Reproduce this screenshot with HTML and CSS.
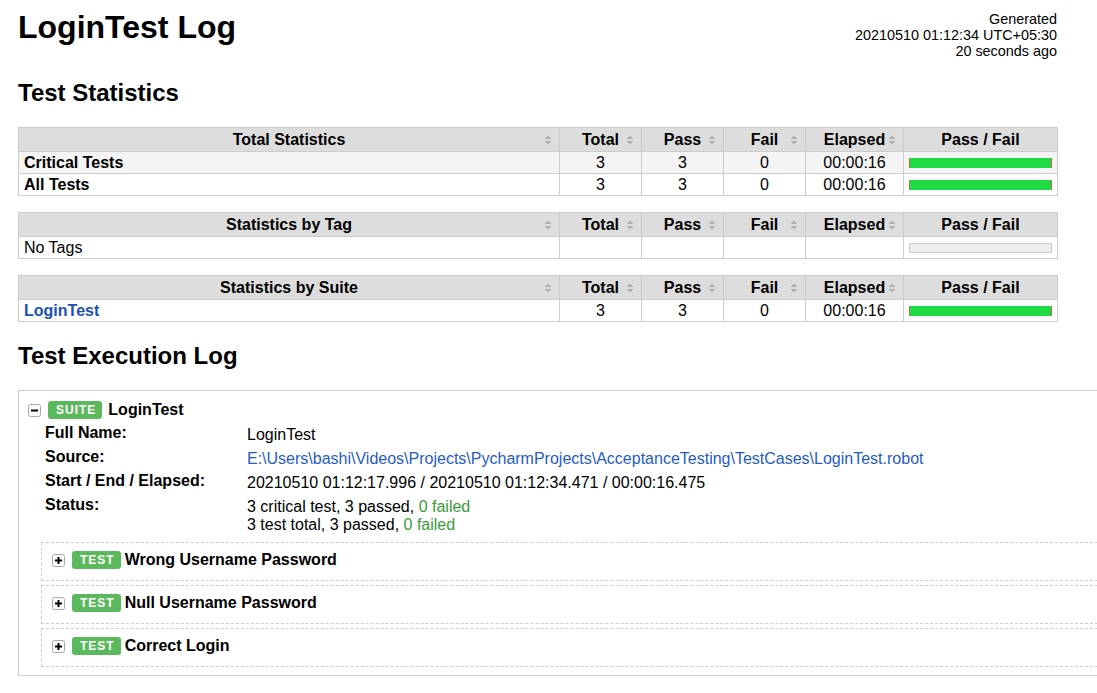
FILE: index.html
```html
<!DOCTYPE html>
<html lang="en">
<head>
<meta charset="utf-8">
<title>LoginTest Log</title>
<link rel="stylesheet" href="styles.css">
</head>
<body>
<div class="page">
  <header class="header">
    <h1>LoginTest Log</h1>
    <div class="generated">Generated<br>20210510 01:12:34 UTC+05:30<br>20 seconds ago</div>
  </header>

  <h2 class="h2-stats">Test Statistics</h2>

  <table class="stats">
    <thead>
      <tr>
        <th class="stat-head">Total Statistics<svg class="sort" width="8" height="10" viewBox="0 0 8 10"><path d="M0.5 4L4 0.5L7.5 4Z M0.5 6L4 9.5L7.5 6Z" fill="#b0b0b0"/></svg></th>
        <th class="col-stat">Total<svg class="sort" width="8" height="10" viewBox="0 0 8 10"><path d="M0.5 4L4 0.5L7.5 4Z M0.5 6L4 9.5L7.5 6Z" fill="#b0b0b0"/></svg></th>
        <th class="col-stat">Pass<svg class="sort" width="8" height="10" viewBox="0 0 8 10"><path d="M0.5 4L4 0.5L7.5 4Z M0.5 6L4 9.5L7.5 6Z" fill="#b0b0b0"/></svg></th>
        <th class="col-stat">Fail<svg class="sort" width="8" height="10" viewBox="0 0 8 10"><path d="M0.5 4L4 0.5L7.5 4Z M0.5 6L4 9.5L7.5 6Z" fill="#b0b0b0"/></svg></th>
        <th class="col-elapsed">Elapsed<svg class="sort" width="8" height="10" viewBox="0 0 8 10"><path d="M0.5 4L4 0.5L7.5 4Z M0.5 6L4 9.5L7.5 6Z" fill="#b0b0b0"/></svg></th>
        <th class="col-graph">Pass / Fail</th>
      </tr>
    </thead>
    <tbody>
      <tr class="row-hover">
        <td class="stat-name"><b>Critical Tests</b></td>
        <td>3</td><td>3</td><td>0</td><td>00:00:16</td>
        <td><div class="graph pass"></div></td>
      </tr>
      <tr>
        <td class="stat-name"><b>All Tests</b></td>
        <td>3</td><td>3</td><td>0</td><td>00:00:16</td>
        <td><div class="graph pass"></div></td>
      </tr>
    </tbody>
  </table>

  <table class="stats">
    <thead>
      <tr>
        <th class="stat-head">Statistics by Tag<svg class="sort" width="8" height="10" viewBox="0 0 8 10"><path d="M0.5 4L4 0.5L7.5 4Z M0.5 6L4 9.5L7.5 6Z" fill="#b0b0b0"/></svg></th>
        <th class="col-stat">Total<svg class="sort" width="8" height="10" viewBox="0 0 8 10"><path d="M0.5 4L4 0.5L7.5 4Z M0.5 6L4 9.5L7.5 6Z" fill="#b0b0b0"/></svg></th>
        <th class="col-stat">Pass<svg class="sort" width="8" height="10" viewBox="0 0 8 10"><path d="M0.5 4L4 0.5L7.5 4Z M0.5 6L4 9.5L7.5 6Z" fill="#b0b0b0"/></svg></th>
        <th class="col-stat">Fail<svg class="sort" width="8" height="10" viewBox="0 0 8 10"><path d="M0.5 4L4 0.5L7.5 4Z M0.5 6L4 9.5L7.5 6Z" fill="#b0b0b0"/></svg></th>
        <th class="col-elapsed">Elapsed<svg class="sort" width="8" height="10" viewBox="0 0 8 10"><path d="M0.5 4L4 0.5L7.5 4Z M0.5 6L4 9.5L7.5 6Z" fill="#b0b0b0"/></svg></th>
        <th class="col-graph">Pass / Fail</th>
      </tr>
    </thead>
    <tbody>
      <tr>
        <td class="stat-name">No Tags</td>
        <td></td><td></td><td></td><td></td>
        <td><div class="graph"></div></td>
      </tr>
    </tbody>
  </table>

  <table class="stats">
    <thead>
      <tr>
        <th class="stat-head">Statistics by Suite<svg class="sort" width="8" height="10" viewBox="0 0 8 10"><path d="M0.5 4L4 0.5L7.5 4Z M0.5 6L4 9.5L7.5 6Z" fill="#b0b0b0"/></svg></th>
        <th class="col-stat">Total<svg class="sort" width="8" height="10" viewBox="0 0 8 10"><path d="M0.5 4L4 0.5L7.5 4Z M0.5 6L4 9.5L7.5 6Z" fill="#b0b0b0"/></svg></th>
        <th class="col-stat">Pass<svg class="sort" width="8" height="10" viewBox="0 0 8 10"><path d="M0.5 4L4 0.5L7.5 4Z M0.5 6L4 9.5L7.5 6Z" fill="#b0b0b0"/></svg></th>
        <th class="col-stat">Fail<svg class="sort" width="8" height="10" viewBox="0 0 8 10"><path d="M0.5 4L4 0.5L7.5 4Z M0.5 6L4 9.5L7.5 6Z" fill="#b0b0b0"/></svg></th>
        <th class="col-elapsed">Elapsed<svg class="sort" width="8" height="10" viewBox="0 0 8 10"><path d="M0.5 4L4 0.5L7.5 4Z M0.5 6L4 9.5L7.5 6Z" fill="#b0b0b0"/></svg></th>
        <th class="col-graph">Pass / Fail</th>
      </tr>
    </thead>
    <tbody>
      <tr>
        <td class="stat-name"><a class="suite-link" href="#s1">LoginTest</a></td>
        <td>3</td><td>3</td><td>0</td><td>00:00:16</td>
        <td><div class="graph pass"></div></td>
      </tr>
    </tbody>
  </table>

  <h2 class="h2-log">Test Execution Log</h2>

  <div class="log">
    <div class="element-header">
      <svg class="toggle" width="13" height="13" viewBox="0 0 13 13"><rect x="0.5" y="0.5" width="12" height="12" rx="2" fill="#fff" stroke="#a8a8a8"/><path d="M3 6.5h7" stroke="#000" stroke-width="2"/></svg>
      <span class="label">Suite</span>
      <span class="name">LoginTest</span>
    </div>
    <div class="details">
      <div class="dt">Full Name:</div>
      <div class="dd">LoginTest</div>
      <div class="dt">Source:</div>
      <div class="dd"><a class="source-link" href="#">E:\Users\bashi\Videos\Projects\PycharmProjects\AcceptanceTesting\TestCases\LoginTest.robot</a></div>
      <div class="dt">Start / End / Elapsed:</div>
      <div class="dd">20210510 01:12:17.996 / 20210510 01:12:34.471 / 00:00:16.475</div>
      <div class="dt">Status:</div>
      <div class="dd">3 critical test, 3 passed, <span class="ok">0 failed</span><br>3 test total, 3 passed, <span class="ok">0 failed</span></div>
    </div>

    <div class="test first">
      <div class="element-header">
        <svg class="toggle" width="13" height="13" viewBox="0 0 13 13"><rect x="0.5" y="0.5" width="12" height="12" rx="2" fill="#fff" stroke="#a8a8a8"/><path d="M3 6.5h7M6.5 3v7" stroke="#000" stroke-width="2"/></svg>
        <span class="label">Test</span>
        <span class="name">Wrong Username Password</span>
      </div>
    </div>
    <div class="test">
      <div class="element-header">
        <svg class="toggle" width="13" height="13" viewBox="0 0 13 13"><rect x="0.5" y="0.5" width="12" height="12" rx="2" fill="#fff" stroke="#a8a8a8"/><path d="M3 6.5h7M6.5 3v7" stroke="#000" stroke-width="2"/></svg>
        <span class="label">Test</span>
        <span class="name">Null Username Password</span>
      </div>
    </div>
    <div class="test">
      <div class="element-header">
        <svg class="toggle" width="13" height="13" viewBox="0 0 13 13"><rect x="0.5" y="0.5" width="12" height="12" rx="2" fill="#fff" stroke="#a8a8a8"/><path d="M3 6.5h7M6.5 3v7" stroke="#000" stroke-width="2"/></svg>
        <span class="label">Test</span>
        <span class="name">Correct Login</span>
      </div>
    </div>
  </div>
</div>
</body>
</html>
```

FILE: styles.css
```css
html {
  overflow-x: hidden;
}

body {
  margin: 0;
  font-family: "Liberation Sans", Arial, Helvetica, sans-serif;
  font-size: 16px;
  color: #000;
  background: #fff;
}

.page {
  padding: 9px 0 0 18px;
}

.header {
  width: 1039px;
  display: flex;
  justify-content: space-between;
  align-items: flex-start;
}

h1 {
  font-size: 32px;
  line-height: 37px;
  font-weight: bold;
  margin: 0;
}

.generated {
  font-size: 14.4px;
  line-height: 16px;
  text-align: right;
  white-space: nowrap;
  padding-top: 2px;
}

h2 {
  font-size: 24px;
  line-height: 28px;
  font-weight: bold;
}

.h2-stats {
  margin: 20px 0 20px;
}

.h2-log {
  margin: 20px 0 20px;
}

/* statistics tables */
.stats {
  width: 1040px;
  border-collapse: collapse;
  table-layout: fixed;
  margin-bottom: 16px;
  font-size: 16px;
}

.stats th,
.stats td {
  border: 1px solid #ccc;
  line-height: 18px;
}

.stats th {
  position: relative;
  background: #ddd;
  padding: 3px 5px 2px;
  font-weight: bold;
  text-align: center;
}

.stats td {
  padding: 2px 5px 1px;
  text-align: center;
  vertical-align: middle;
}

.stats td.stat-name {
  text-align: left;
}

.col-stat {
  width: 71px;
}

.col-elapsed {
  width: 87px;
}

.col-graph {
  width: 143px;
}

.sort {
  position: absolute;
  right: 7px;
  top: 50%;
  transform: translateY(-50%);
}

.row-hover {
  background: #f4f4f4;
}

.graph {
  height: 8px;
  border: 1px solid #ccc;
  background: #eee;
}

.graph.pass {
  background: #1edb44;
  border-color: #1edb44 #d0603a #1edb44 #d0603a;
}

.suite-link {
  color: #1b50b5;
  font-weight: bold;
  text-decoration: none;
}

/* execution log */
.log {
  width: 1100px;
  border: 1px solid #ccc;
  padding: 10px 0 8px 9px;
}

.element-header {
  display: flex;
  align-items: center;
  height: 18px;
}

.toggle {
  flex: none;
  margin-right: 7px;
}

.label {
  display: inline-block;
  height: 18px;
  line-height: 18px;
  padding: 0 6px 0 8px;
  border-radius: 3px;
  background: #5cb85c;
  color: #fff;
  font-size: 12px;
  font-weight: bold;
  letter-spacing: 1px;
  text-transform: uppercase;
}

.name {
  margin-left: 6px;
  font-weight: bold;
  line-height: 18px;
}

.test .name {
  margin-left: 4px;
}

.details {
  display: grid;
  grid-template-columns: 202px auto;
  margin: 4px 0 0 17px;
  line-height: 18px;
}

.dt {
  font-weight: bold;
  padding: 1px 0 0;
}

.dd {
  padding: 3px 0 3px;
}

.source-link {
  color: #1f5cc5;
  text-decoration: none;
}

.ok {
  color: #3a9a3a;
}

.test {
  margin: 4px 0 0 13px;
  border: 1px dashed #ccc;
  padding: 8px 10px 11px;
}

.test.first {
  margin-top: 5px;
}
```
